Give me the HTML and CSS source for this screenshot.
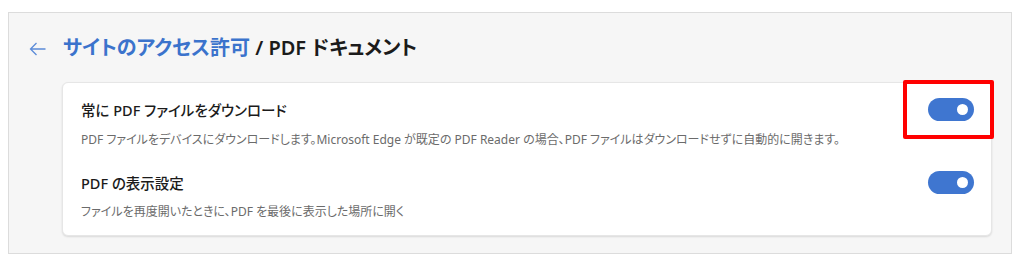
FILE: index.html
```html
<!DOCTYPE html>
<html lang="ja">
<head>
  <meta charset="UTF-8">
  <title>PDF ドキュメント</title>
  <link rel="stylesheet" href="styles.css">
</head>
<body>
  <div class="panel">
    <div class="header">
      <a href="#" class="back" aria-label="戻る">
        <svg width="17" height="14" viewBox="0 0 17 14">
          <path d="M16.5 7H1.5M7.5 1L1.5 7L7.5 13" fill="none" stroke="#5b8bd8" stroke-width="1.3"/>
        </svg>
      </a>
      <h2><a href="#" class="crumb">サイトのアクセス許可</a> / PDF ドキュメント</h2>
    </div>

    <div class="card">
      <div class="row">
        <div class="text">
          <div class="title">常に PDF ファイルをダウンロード</div>
          <div class="desc">PDF ファイルをデバイスにダウンロードします。Microsoft Edge が既定の PDF Reader の場合、PDF ファイルはダウンロードせずに自動的に開きます。</div>
        </div>
        <div class="toggle-wrap">
          <span class="toggle on"></span>
          <span class="mark"></span>
        </div>
      </div>

      <div class="row">
        <div class="text">
          <div class="title">PDF の表示設定</div>
          <div class="desc">ファイルを再度開いたときに、PDF を最後に表示した場所に開く</div>
        </div>
        <div class="toggle-wrap">
          <span class="toggle on"></span>
        </div>
      </div>
    </div>
  </div>
</body>
</html>
```

FILE: styles.css
```css
body {
  margin: 0;
  padding: 12px 12px 0 8px;
  background-color: #fff;
  font-family: "Noto Sans", "Noto Sans CJK JP", sans-serif;
  font-feature-settings: "palt";
  color: #1b1b1b;
}

.panel {
  width: 1002px;
  height: 240px;
  background-color: #f6f6f6;
  border: 1px solid #dcdcdc;
}

.header {
  display: flex;
  align-items: center;
  padding: 21px 0 0 20px;
  height: 28px;
  margin-bottom: 20px;
}

.back {
  display: flex;
  margin-right: 17px;
  margin-top: 1px;
}

h2 {
  margin: 0;
  font-size: 20px;
  line-height: 28px;
  font-weight: 600;
  color: #1b1b1b;
}

.crumb {
  color: #3b73cc;
  text-decoration: none;
}

.card {
  margin: 0 19px 0 53px;
  background-color: #fff;
  border: 1px solid #e6e6e6;
  border-radius: 6px;
  box-shadow: 0 1px 2px rgba(0, 0, 0, 0.12);
  padding: 16px 17px 14px 18px;
}

.row {
  display: flex;
  align-items: flex-start;
}

.row + .row {
  margin-top: 23px;
}

.text {
  flex: 1;
}

.title {
  font-size: 14.5px;
  line-height: 22px;
  font-weight: 500;
}

.desc {
  margin-top: 10px;
  font-size: 12px;
  line-height: 18px;
  color: #6b6b6b;
}

.row + .row .desc {
  margin-top: 9px;
}

.toggle-wrap {
  position: relative;
  margin-top: -1px;
}

.toggle {
  display: block;
  position: relative;
  width: 46px;
  height: 23px;
  border-radius: 12px;
  background-color: #3f76d0;
}

.toggle::after {
  content: "";
  position: absolute;
  right: 6px;
  top: 6px;
  width: 11px;
  height: 11px;
  border-radius: 50%;
  background-color: #fff;
}

/* red highlight around the first switch */
.mark {
  position: absolute;
  left: -25px;
  top: -18px;
  width: 83px;
  height: 51px;
  border: 4px solid #f00;
  border-radius: 2px;
}
```
